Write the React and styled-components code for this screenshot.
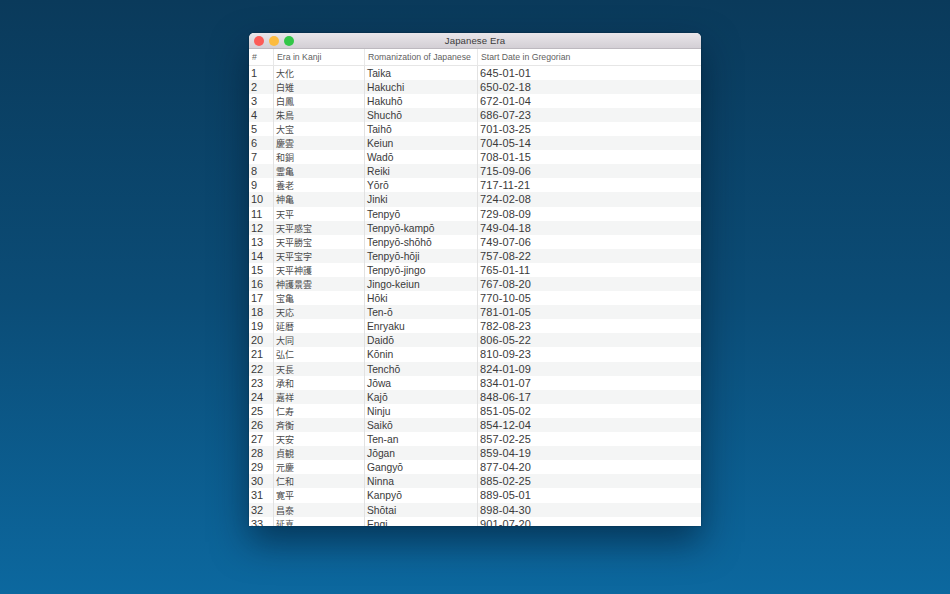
import React from 'react';
import styled, { createGlobalStyle } from 'styled-components';

const ERAS = [
  ['大化', 'Taika', '645-01-01'],
  ['白雉', 'Hakuchi', '650-02-18'],
  ['白鳳', 'Hakuhō', '672-01-04'],
  ['朱鳥', 'Shuchō', '686-07-23'],
  ['大宝', 'Taihō', '701-03-25'],
  ['慶雲', 'Keiun', '704-05-14'],
  ['和銅', 'Wadō', '708-01-15'],
  ['霊亀', 'Reiki', '715-09-06'],
  ['養老', 'Yōrō', '717-11-21'],
  ['神亀', 'Jinki', '724-02-08'],
  ['天平', 'Tenpyō', '729-08-09'],
  ['天平感宝', 'Tenpyō-kampō', '749-04-18'],
  ['天平勝宝', 'Tenpyō-shōhō', '749-07-06'],
  ['天平宝字', 'Tenpyō-hōji', '757-08-22'],
  ['天平神護', 'Tenpyō-jingo', '765-01-11'],
  ['神護景雲', 'Jingo-keiun', '767-08-20'],
  ['宝亀', 'Hōki', '770-10-05'],
  ['天応', 'Ten-ō', '781-01-05'],
  ['延暦', 'Enryaku', '782-08-23'],
  ['大同', 'Daidō', '806-05-22'],
  ['弘仁', 'Kōnin', '810-09-23'],
  ['天長', 'Tenchō', '824-01-09'],
  ['承和', 'Jōwa', '834-01-07'],
  ['嘉祥', 'Kajō', '848-06-17'],
  ['仁寿', 'Ninju', '851-05-02'],
  ['斉衡', 'Saikō', '854-12-04'],
  ['天安', 'Ten-an', '857-02-25'],
  ['貞観', 'Jōgan', '859-04-19'],
  ['元慶', 'Gangyō', '877-04-20'],
  ['仁和', 'Ninna', '885-02-25'],
  ['寛平', 'Kanpyō', '889-05-01'],
  ['昌泰', 'Shōtai', '898-04-30'],
  ['延喜', 'Engi', '901-07-20'],
];

const COLUMNS = '24px 91px 113px 1fr';

const GlobalStyle = createGlobalStyle`
  html, body {
    margin: 0;
    height: 100%;
    overflow: hidden;
  }
  body {
    font-family: "Liberation Sans", "Noto Sans CJK JP", sans-serif;
  }
`;

const Desktop = styled.div`
  height: 594px;
  box-sizing: border-box;
  padding-top: 33px;
  display: flex;
  justify-content: center;
  align-items: flex-start;
  background: linear-gradient(180deg, #0a3a5b 0%, #0b4c76 50%, #0c689f 100%);
`;

const Window = styled.div`
  width: 452px;
  height: 493px;
  display: flex;
  flex-direction: column;
  overflow: hidden;
  background: #fff;
  border-radius: 5px 5px 0 0;
  box-shadow: 0 16px 36px rgba(0, 20, 40, 0.55), 0 0 2px rgba(0, 0, 0, 0.4);
`;

const TitleBar = styled.div`
  position: relative;
  flex: none;
  box-sizing: border-box;
  height: 16px;
  display: flex;
  align-items: center;
  justify-content: center;
  background: linear-gradient(180deg, #e9e6ea 0%, #d3cfd5 100%);
  border-bottom: 1px solid #bdb9bf;
  font-size: 9.6px;
  letter-spacing: 0.1px;
  color: #3c3c3c;
`;

const Lights = styled.div`
  position: absolute;
  left: 5px;
  top: 3px;
  display: flex;
  gap: 5px;
`;

const Light = styled.span`
  width: 10px;
  height: 10px;
  border-radius: 50%;
  background: ${(p) => p.$color};
`;

const Header = styled.div`
  flex: none;
  box-sizing: border-box;
  height: 16.6px;
  display: grid;
  grid-template-columns: ${COLUMNS};
  align-items: stretch;
  border-bottom: 1px solid #e6e6e6;
  font-size: 8.7px;
  color: #5f5f5f;
`;

const HeaderCell = styled.div`
  display: flex;
  align-items: center;
  padding-left: 3px;
  white-space: nowrap;
  & + & {
    border-left: 1px solid #e8e8e8;
  }
`;

const Rows = styled.div`
  flex: 1;
  min-height: 0;
  overflow: hidden;
`;

const Row = styled.div`
  height: 14.1px;
  display: grid;
  grid-template-columns: ${COLUMNS};
  grid-template-rows: 14.1px;
  font-size: 10.3px;
  line-height: 14px;
  color: #3a3a3a;
  background: ${(p) => (p.$odd ? '#f4f5f5' : '#fff')};
`;

const Cell = styled.div`
  padding-left: 2px;
  white-space: nowrap;
  & + & {
    border-left: 1px solid #e2e2e2;
  }
`;

const NumberCell = styled(Cell)`
  font-size: 11px;
`;

const DateCell = styled(Cell)`
  font-size: 11px;
  letter-spacing: 0.1px;
`;

const RomanCell = styled(Cell)`
  padding-top: 1px;
`;

const KanjiCell = styled(Cell)`
  padding-top: 1px;
  font-size: 9px;
  color: #4a4a4a;
`;

export default function App() {
  return (
    <>
      <GlobalStyle />
      <Desktop>
        <Window>
          <TitleBar>
            <Lights>
              <Light $color="#fc5b57" />
              <Light $color="#fdbc40" />
              <Light $color="#33c748" />
            </Lights>
            Japanese Era
          </TitleBar>
          <Header>
            <HeaderCell>#</HeaderCell>
            <HeaderCell>Era in Kanji</HeaderCell>
            <HeaderCell>Romanization of Japanese</HeaderCell>
            <HeaderCell>Start Date in Gregorian</HeaderCell>
          </Header>
          <Rows>
            {ERAS.map(([kanji, roman, date], i) => (
              <Row key={date} $odd={i % 2 === 1}>
                <NumberCell>{i + 1}</NumberCell>
                <KanjiCell>{kanji}</KanjiCell>
                <RomanCell>{roman}</RomanCell>
                <DateCell>{date}</DateCell>
              </Row>
            ))}
          </Rows>
        </Window>
      </Desktop>
    </>
  );
}
